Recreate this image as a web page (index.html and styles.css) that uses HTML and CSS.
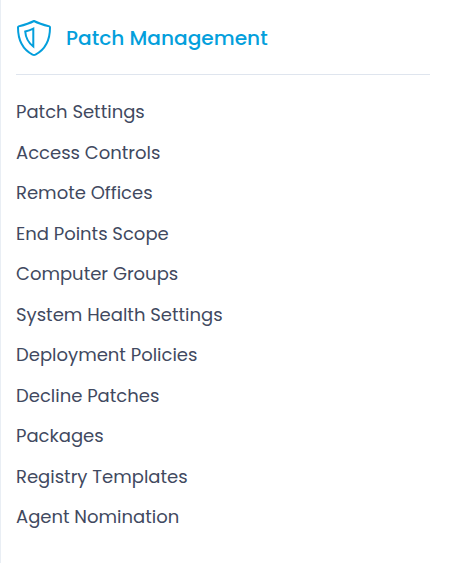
FILE: index.html
```html
<!DOCTYPE html>
<html lang="en">
<head>
    <meta charset="UTF-8">
    <meta name="viewport" content="width=device-width, initial-scale=1.0">
    <title>Patch Management</title>
    <link rel="stylesheet" href="styles.css">
</head>
<body>
    <section class="panel">
        <header class="panel-header">
            <svg class="panel-icon" viewBox="0 0 36 38" fill="none" stroke="currentColor" stroke-width="2" stroke-linejoin="round">
                <path d="M18 2 C13 4.6 8 6 2.6 7.4 Q2 7.600 2 8.500 C2 20 6 30 16.500 35.600 Q18 36.300 19.500 35.600 C30 30 34 20 34 8.500 Q34 7.600 33.400 7.400 C28 6 23 4.600 18 2 Z"/>
                <path d="M17.3 9.600 V27.500 C12 23.500 9.700 18.500 9.200 12.500 C12 11.800 14.500 10.900 17.3 9.600 Z" stroke-linejoin="miter"/>
            </svg>
            <h2 class="panel-title">Patch Management</h2>
        </header>
        <ul class="menu">
            <li><a class="menu-link">Patch Settings</a></li>
            <li><a class="menu-link">Access Controls</a></li>
            <li><a class="menu-link">Remote Offices</a></li>
            <li><a class="menu-link">End Points Scope</a></li>
            <li><a class="menu-link">Computer Groups</a></li>
            <li><a class="menu-link">System Health Settings</a></li>
            <li><a class="menu-link">Deployment Policies</a></li>
            <li><a class="menu-link">Decline Patches</a></li>
            <li><a class="menu-link">Packages</a></li>
            <li><a class="menu-link">Registry Templates</a></li>
            <li><a class="menu-link">Agent Nomination</a></li>
        </ul>
    </section>
</body>
</html>
```
FILE: styles.css
```css
* {
    box-sizing: border-box;
}
body {
    margin: 0;
    background: #fff;
    font-family: Poppins, Inter, sans-serif;
    color: #414960;
}
.panel {
    min-height: 563px;
    padding: 0 22px 0 15px;
    border-left: 1px solid #e9eef4;
}
.panel-header {
    display: flex;
    align-items: center;
    gap: 14px;
    height: 75px;
    padding-top: 2px;
    border-bottom: 1px solid #dfe5ee;
    color: #049fdc;
}
.panel-icon {
    width: 36px;
    height: 38px;
}
.panel-title {
    margin: 0;
    font-size: 20.15px;
    font-weight: 500;
}
.menu {
    margin: 0;
    padding: 17px 0 0;
    list-style: none;
}
.menu li {
    height: 40.5px;
}
.menu-link {
    display: block;
    font-size: 18px;
    line-height: 40px;
}
```
